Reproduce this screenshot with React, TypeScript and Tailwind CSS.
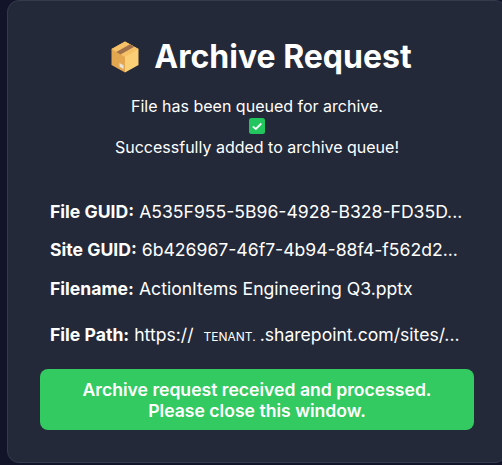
import React from "react";

const BoxIcon = () => (
  <svg width="28" height="32" viewBox="0 0 28 32" className="shrink-0">
    <path d="M14 0.5 L27.5 8 L27.5 24 L14 31.5 Z" fill="#fbcf76" />
    <path d="M14 0.5 L0.5 8 L0.5 24 L14 31.5 Z" fill="#e5a650" />
    <path d="M14 0.5 L27.5 8 L14 16 L0.5 8 Z" fill="#f6c167" />
    <path d="M19 3.3 L23.3 5.7 L9.5 13.5 L5.2 11 Z" fill="#a0714a" />
    <path d="M8.5 22 L12.5 24.3 L12.5 28 L8.5 25.7 Z" fill="#e8e3d8" />
  </svg>
);

const CheckIcon = () => (
  <svg width="16" height="16" viewBox="0 0 16 16">
    <rect width="16" height="16" rx="2.5" fill="#22c55e" />
    <path d="M3.8 8.4 L6.8 11 L12.3 5.5" fill="none" stroke="#f4fff8" strokeWidth="1.8" />
  </svg>
);

const InfoRow = ({ label, value, className }: { label: string; value: React.ReactNode; className?: string }) => (
  <div className={`whitespace-nowrap ${className ?? ""}`}>
    <span className="font-bold mr-[5px]">{label}</span>
    {value}
  </div>
);

export default function App() {
  return (
    <div className="w-[502px] h-[465px] overflow-hidden bg-[#12152a] pl-[7px] font-['Inter',sans-serif] text-white">
      <div className="w-[500px] h-[463px] rounded-xl border border-[#353b4c] bg-[#232939] px-8 pt-[38px]">
        <h1 className="flex items-center justify-center gap-[15px] text-[32px] leading-9 font-bold pl-[9px]">
          <BoxIcon />
          Archive Request
        </h1>
        <div className="mt-[21px] text-center text-[16px] leading-[20px]">
          <p>File has been queued for archive.</p>
          <div className="flex justify-center h-[21px] pt-[2px]">
            <CheckIcon />
          </div>
          <p>Successfully added to archive queue!</p>
        </div>
        <div className="mt-[45px] px-[10px] text-[17.6px] leading-[20px]">
          <InfoRow label="File GUID:" value="A535F955-5B96-4928-B328-FD35D..." />
          <InfoRow className="mt-[18px]" label="Site GUID:" value="6b426967-46f7-4b94-88f4-f562d2..." />
          <InfoRow className="mt-[19px]" label="Filename:" value="ActionItems Engineering Q3.pptx" />
          <InfoRow
            className="mt-[26px]"
            label="File Path:"
            value={
              <>
                https://
                <span className="pl-[10px] pr-[4px] text-[12px]">TENANT.</span>
                .sharepoint.com/sites/...
              </>
            }
          />
        </div>
        <div className="mt-[22px] rounded-lg bg-[#32ca61] pt-[10px] pb-[9px] text-center text-[17.6px] leading-[21px] font-semibold">
          Archive request received and processed.
          <br />
          Please close this window.
        </div>
      </div>
    </div>
  );
}
